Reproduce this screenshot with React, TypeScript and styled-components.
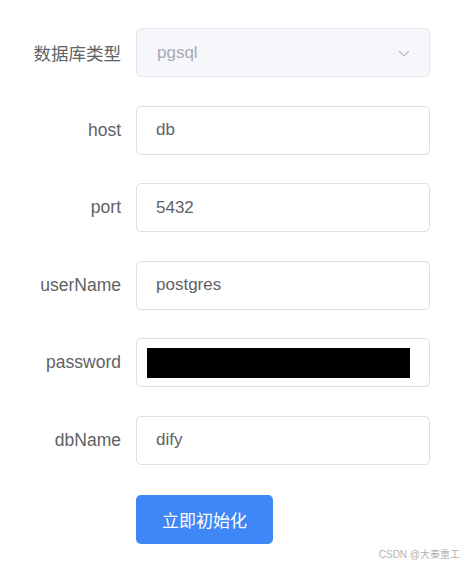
import React from "react";
import styled, { createGlobalStyle } from "styled-components";

const GlobalStyle = createGlobalStyle`
    html, body {
        margin: 0;
        padding: 0;
        background: #ffffff;
    }
    body {
        font-family: "Liberation Sans", "Noto Sans CJK SC", sans-serif;
    }
`;

interface Field {
    label: string;
    value: string;
    masked?: boolean;
}

const fields: Field[] = [
    { label: "host", value: "db" },
    { label: "port", value: "5432" },
    { label: "userName", value: "postgres" },
    { label: "password", value: "", masked: true },
    { label: "dbName", value: "dify" },
];

export default function App() {
    return (
        <Page>
            <GlobalStyle />
            <Form>
                <Row>
                    <Label>数据库类型</Label>
                    <SelectBox>
                        <SelectText>pgsql</SelectText>
                        <svg width="14" height="14" viewBox="0 0 14 14">
                            <path d="M2 5l5 5 5-5" fill="none" stroke="#b8bbc2" strokeWidth="1.2" />
                        </svg>
                    </SelectBox>
                </Row>
                {fields.map(field => (
                    <Row key={field.label}>
                        <Label>{field.label}</Label>
                        <InputBox>
                            {field.masked ? <Redacted /> : <InputText>{field.value}</InputText>}
                        </InputBox>
                    </Row>
                ))}
                <ButtonRow>
                    <SubmitButton>立即初始化</SubmitButton>
                </ButtonRow>
            </Form>
            <Watermark>CSDN @大秦重工</Watermark>
        </Page>
    );
}

const Page = styled.div`
    position: relative;
    width: 467px;
    height: 569px;
    overflow: hidden;
`;

const Form = styled.div`
    display: flex;
    flex-direction: column;
    gap: 28.5px;
    padding-top: 28px;
`;

const Row = styled.div`
    display: flex;
    align-items: center;
    gap: 15px;
`;

const Label = styled.div`
    width: 121px;
    text-align: right;
    font-size: 17.5px;
    color: #606266;
`;

const SelectBox = styled.div`
    box-sizing: border-box;
    width: 294px;
    height: 49px;
    display: flex;
    align-items: center;
    justify-content: space-between;
    padding: 0 18px 0 20px;
    background: #f5f7fa;
    border: 1px solid #e4e7ed;
    border-radius: 5px;
`;

const SelectText = styled.span`
    font-size: 17px;
    color: #a8abb2;
`;

const InputBox = styled.div`
    box-sizing: border-box;
    width: 294px;
    height: 49px;
    display: flex;
    align-items: center;
    padding: 0 19px;
    background: #ffffff;
    border: 1px solid #dcdfe6;
    border-radius: 5px;
`;

const InputText = styled.span`
    font-size: 17px;
    color: #606266;
`;

const Redacted = styled.div`
    width: 264px;
    height: 30px;
    margin-left: -9px;
    background: #000000;
`;

const ButtonRow = styled.div`
    display: flex;
    padding-left: 136px;
    margin-top: 2px;
`;

const SubmitButton = styled.button`
    box-sizing: border-box;
    width: 137px;
    height: 49px;
    border: none;
    border-radius: 5px;
    background: #3f87f7;
    color: #ffffff;
    font-family: "Noto Sans CJK SC", sans-serif;
    font-size: 17px;
`;

const Watermark = styled.div`
    position: absolute;
    right: 7px;
    bottom: 8px;
    font-size: 10px;
    color: #b4b4b4;
    font-family: "Liberation Sans", "Noto Sans CJK SC", sans-serif;
`;
